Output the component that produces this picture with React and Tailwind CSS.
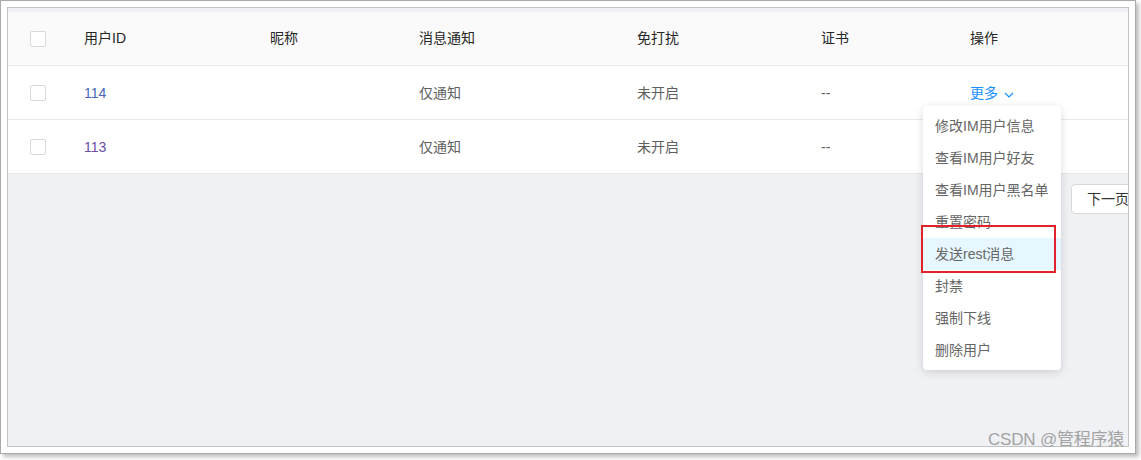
const FONT = { fontFamily: '"Liberation Sans", "Noto Sans CJK SC", sans-serif' }

const columns = ['用户ID', '昵称', '消息通知', '免打扰', '证书', '操作']

const rows = [
  { id: '114', idColor: 'text-[#4867b8]', notify: '仅通知', dnd: '未开启', cert: '--', more: true },
  { id: '113', idColor: 'text-[#6a4ea6]', notify: '仅通知', dnd: '未开启', cert: '--', more: false },
]

const menuItems = [
  '修改IM用户信息',
  '查看IM用户好友',
  '查看IM用户黑名单',
  '重置密码',
  '发送rest消息',
  '封禁',
  '强制下线',
  '删除用户',
]

const GRID = 'grid grid-cols-[76px_186px_149px_218px_184px_149px_1fr] items-center'

function Checkbox() {
  return <div className="w-4 h-4 rounded-[2px] border border-[#d9d9d9] bg-white" />
}

function Chevron() {
  return (
    <svg width="10" height="6" viewBox="0 0 10 6" fill="none" className="ml-[6px] mt-[2px]">
      <path d="M1 1l4 4 4-4" stroke="#1890ff" strokeWidth="1.2" />
    </svg>
  )
}

export default function App() {
  return (
    <div className="relative w-[1141px] h-[460px] bg-white text-[14px]" style={FONT}>
      {/* 截图外框 */}
      <div className="w-[1136px] h-[454px] border border-[#a9a9a9] bg-white p-[6px] shadow-[3px_3px_4px_rgba(0,0,0,0.25)]">
        <div className="relative w-full h-full border border-[#c3c3c3] bg-[#f0f1f5] pt-[4px] overflow-hidden">
          {/* 表格 */}
          <div className="bg-white">
            <div className={`${GRID} h-[54px] bg-[#fafafa] border-b border-[#e8e8e8] text-[#262626]`}>
              <div className="pl-[22px]">
                <Checkbox />
              </div>
              {columns.map((c) => (
                <div key={c}>{c}</div>
              ))}
            </div>
            {rows.map((r) => (
              <div key={r.id} className={`${GRID} h-[54px] border-b border-[#e8e8e8] text-[#5f5f5f]`}>
                <div className="pl-[22px]">
                  <Checkbox />
                </div>
                <div className={`${r.idColor} pt-[2px]`}>{r.id}</div>
                <div />
                <div className="pt-[2px]">{r.notify}</div>
                <div className="pt-[2px]">{r.dnd}</div>
                <div className="pt-[2px]">{r.cert}</div>
                <div className="pt-[2px]">
                  {r.more && (
                    <span className="flex items-center text-[#1890ff]">
                      更多
                      <Chevron />
                    </span>
                  )}
                </div>
              </div>
            ))}
          </div>

          {/* 分页 */}
          <div className="flex pl-[1063px] pt-[10px]">
            <button className="shrink-0 w-[80px] h-[30px] rounded-[4px] border border-[#d9d9d9] bg-white text-left pl-[15px] text-[#333]">
              下一页
            </button>
          </div>

          {/* 下拉菜单 */}
          <div className="absolute left-[915px] top-[98px] w-[138px] rounded-[4px] bg-white py-[4px] shadow-[0_2px_8px_rgba(0,0,0,0.15)] text-[#666]">
            {menuItems.map((item, i) => (
              <div
                key={item}
                className={`h-[32px] flex items-center pl-[12px] ${i === 4 ? 'bg-[#e6f7ff]' : ''}`}
              >
                {item}
              </div>
            ))}
          </div>

          {/* 红框标注 */}
          <div className="absolute left-[913px] top-[217px] w-[135px] h-[48px] border-2 border-[#e3212b]" />
        </div>
      </div>

      {/* 水印 */}
      <div className="absolute left-[988px] top-[429px] text-[17px] leading-[22px] text-[#a3a3a3] tracking-[-0.2px]">
        CSDN @管程序猿
      </div>
    </div>
  )
}
